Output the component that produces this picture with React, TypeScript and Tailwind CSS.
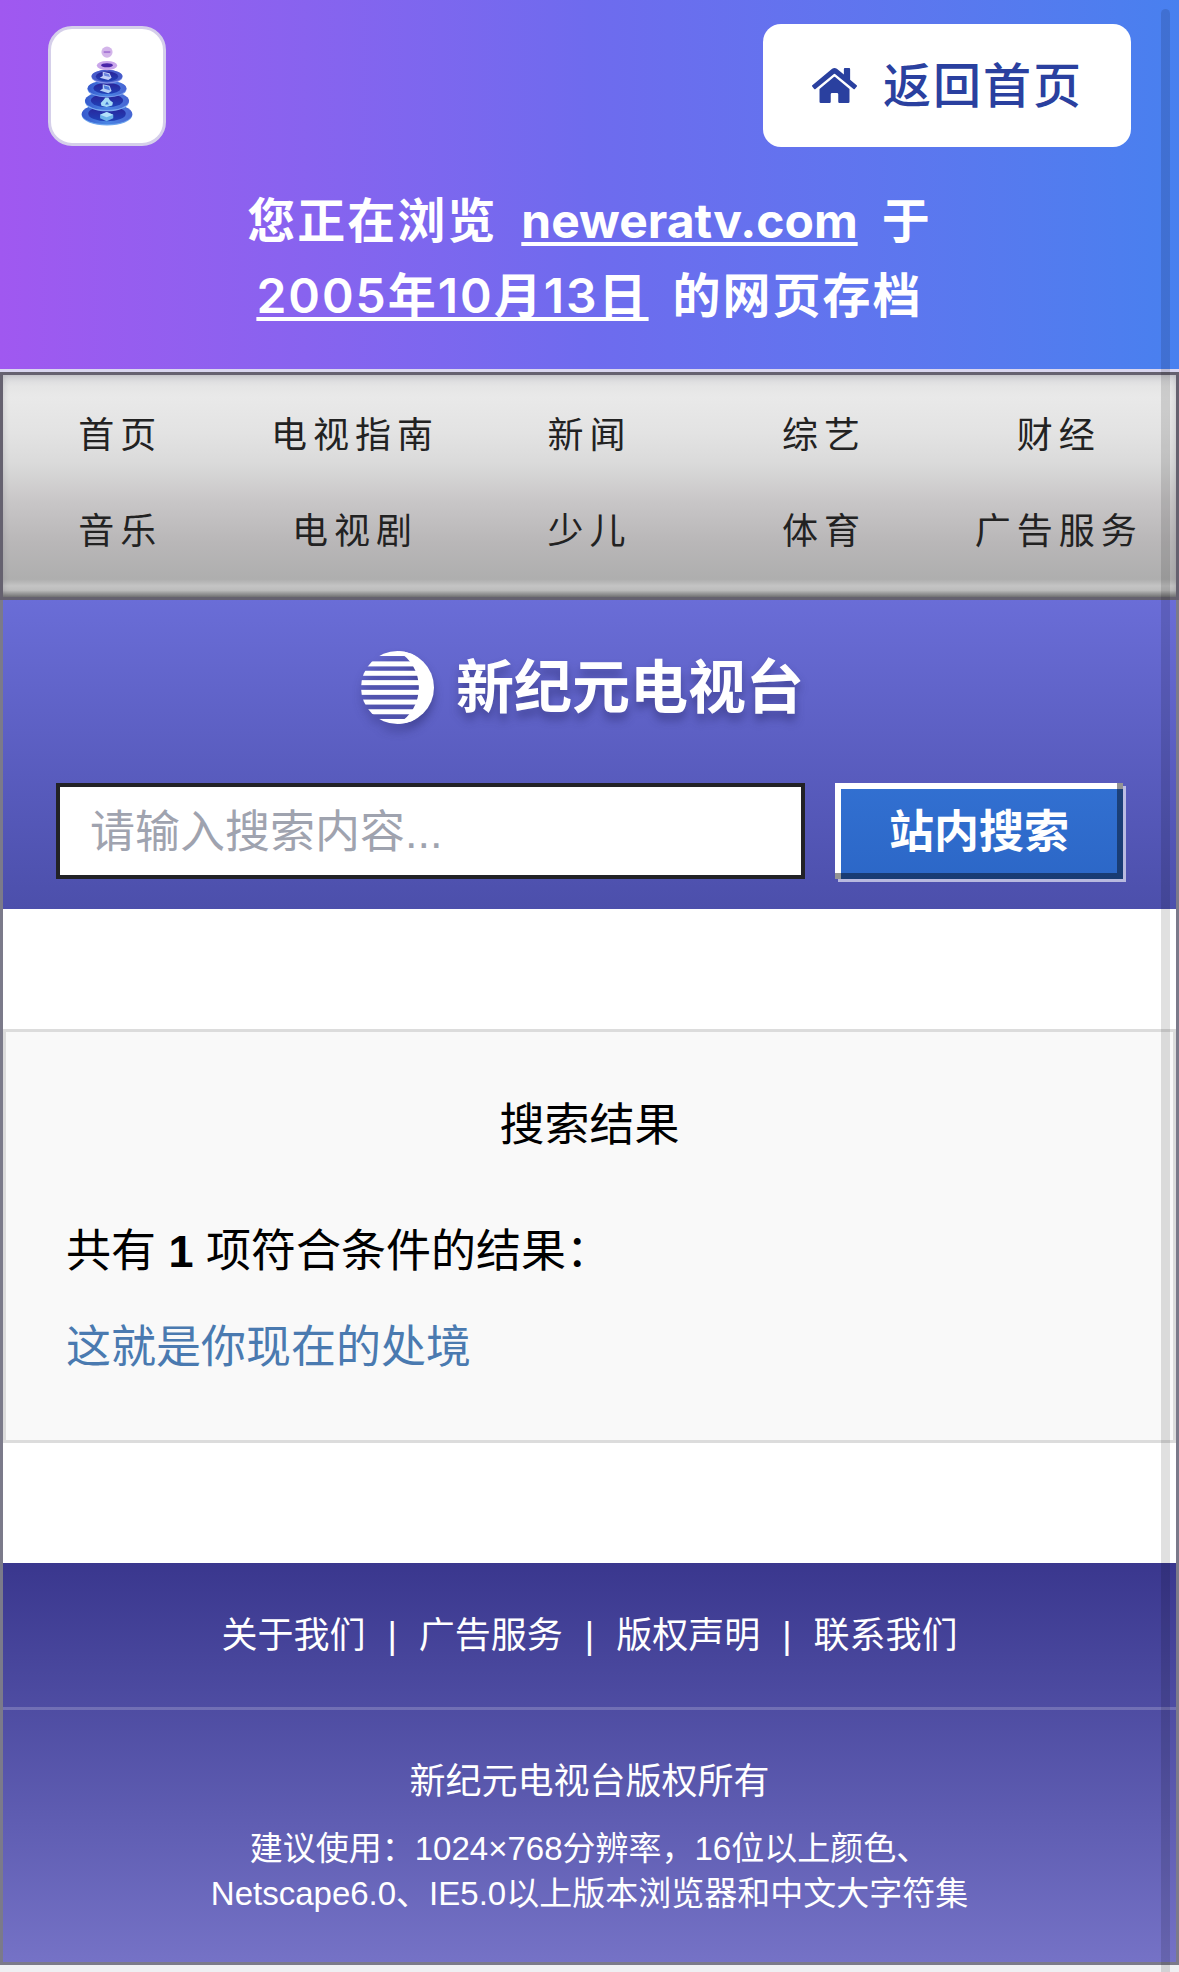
import React from "react";
import { FaHome } from "react-icons/fa";

const navItems = ["首页", "电视指南", "新闻", "综艺", "财经", "音乐", "电视剧", "少儿", "体育", "广告服务"];
const footerLinks = ["关于我们", "广告服务", "版权声明", "联系我们"];

function ArchiveLogo() {
  return (
    <svg viewBox="150 110 164 246" className="h-[82px] w-[54px]" aria-hidden="true">
      <defs>
        <linearGradient id="tier" x1="0" y1="0" x2="1" y2="0">
          <stop offset="0" stopColor="#3558cc" />
          <stop offset="0.5" stopColor="#4a86e4" />
          <stop offset="1" stopColor="#4763d2" />
        </linearGradient>
        <linearGradient id="well" x1="0" y1="0" x2="0" y2="1">
          <stop offset="0" stopColor="#2a2298" />
          <stop offset="1" stopColor="#1f42b8" />
        </linearGradient>
      </defs>
      <ellipse cx="232" cy="321" rx="77" ry="32" fill="#6fa6ee" />
      <ellipse cx="232" cy="318" rx="77" ry="31" fill="url(#tier)" />
      <ellipse cx="232" cy="317" rx="57" ry="23" fill="url(#well)" />
      <path d="M211 320l20-8 20 8v11l-20 9-20-9z" fill="#6db4ea" />
      <path d="M211 320l20-8 20 8-20 8z" fill="#b5e2fa" />
      <ellipse cx="232" cy="281" rx="67" ry="29" fill="#78a9ef" />
      <ellipse cx="232" cy="278" rx="67" ry="28" fill="url(#tier)" />
      <ellipse cx="232" cy="277" rx="49" ry="20" fill="url(#well)" />
      <path d="M213 285l9-10 5-7h9l5 8 9 7-2 9-17 5-16-4z" fill="#a5dbf7" />
      <path d="M226 289l6-9 6 9z" fill="#3b72cf" />
      <ellipse cx="232" cy="243" rx="59" ry="25" fill="#759cec" />
      <ellipse cx="232" cy="240" rx="59" ry="24" fill="url(#tier)" />
      <ellipse cx="232" cy="240" rx="41" ry="17" fill="url(#well)" />
      <path d="M219 228l21 4 6 16-10 7-26-8 9-6z" fill="#b3cff6" />
      <path d="M222 231l16 4 3 11-17-5z" fill="#4f7bdc" />
      <ellipse cx="232" cy="205" rx="47" ry="21" fill="#7f92e6" />
      <ellipse cx="232" cy="203" rx="47" ry="19" fill="#465bc9" />
      <ellipse cx="232" cy="204" rx="34" ry="15" fill="url(#well)" />
      <path d="M219 190l21 4 6 14-10 7-26-7 9-5z" fill="#c2cff7" />
      <path d="M222 193l16 4 3 9-17-4z" fill="#6a83de" />
      <ellipse cx="232" cy="171" rx="31" ry="14" fill="#c8a5ea" />
      <ellipse cx="232" cy="170" rx="18" ry="6" fill="#4a24a8" />
      <circle cx="232" cy="130" r="17" fill="#d3b5ea" />
      <path d="M222 127h20v6h-20z" fill="#a97bd6" />
    </svg>
  );
}

function StationMark() {
  return (
    <svg viewBox="62 91 218 218" className="size-[73px] shrink-0" fill="#fff" aria-hidden="true">
      <clipPath id="globe">
        <circle cx="171" cy="200" r="109" />
      </clipPath>
      <g clipPath="url(#globe)">
        {[91, 122, 150, 178, 207, 236, 265, 294].map((y) => (
          <rect key={y} x="62" y={y} width="174" height="15" />
        ))}
        <path d="M171 91A125 125 0 0 1 171 309L290 309V91Z" />
      </g>
    </svg>
  );
}

export default function App() {
  return (
    <div className="relative min-h-screen bg-[#eff0f3] font-['Liberation_Sans','Noto_Sans_CJK_SC',sans-serif] text-black">
      <header className="bg-linear-to-r from-[#a058f0] via-[#6e6bee] to-[#4880ef] px-12 pt-6 pb-9 font-['Inter','Noto_Sans_CJK_SC',sans-serif]">
        <div className="flex items-center justify-between">
          <a
            href="#archive"
            aria-label="网页存档"
            className="flex h-[120px] w-[118px] items-center justify-center rounded-3xl border-3 border-[#d5cfea] bg-white"
          >
            <ArchiveLogo />
          </a>
          <a
            href="#home"
            className="flex h-[123px] items-center gap-6 rounded-[18px] bg-white px-12 text-5xl font-medium tracking-[2px] text-[#2a409f]"
          >
            <span className="flex w-12 justify-center">
              <FaHome size={45} />
            </span>
            返回首页
          </a>
        </div>
        <p className="mt-9 text-center text-5xl/[75px] font-semibold tracking-[2px] text-white decoration-4 underline-offset-4 [text-decoration-skip-ink:none]">
          您正在浏览
          <a href="#site" className="mx-6 font-bold tracking-normal underline">neweratv.com</a>
          于
          <br />
          <a href="#date" className="mr-6 underline">2005年10月13日</a>
          的网页存档
        </p>
      </header>

      <nav
        aria-label="频道"
        className="border-t-3 border-[#d9d6ef]"
      >
        <ul className="grid grid-cols-5 border-3 border-[#65616f] bg-[linear-gradient(to_bottom,#d6d6da_0%,#e5e5e5_5%,#e9e9e9_10%,#e3e3e3_26%,#dadada_40%,#c8c6c7_57%,#b9b7b8_75%,#aeaeae_92%,#c4c4c4_95%,#bcbcbc_97%,#777_100%)] pt-[13px] pb-[17px] shadow-[inset_0_0_6px_rgba(80,80,90,0.25)]">
          {navItems.map((item) => (
            <li key={item} className="flex h-24 items-center justify-center">
              <a href="#channel" className="text-4xl tracking-[6px] whitespace-nowrap text-[#222]">
                {item}
              </a>
            </li>
          ))}
        </ul>
      </nav>

      <div className="border-x-3 border-b-3 border-[#7b7a8a] bg-white">
        <section className="bg-linear-to-b from-[#6a6dd7] to-[#4c4fab] px-[53px] pt-[51px] pb-[30px]">
          <div className="flex items-center justify-center gap-[22px] pr-3.5 drop-shadow-[0_7px_5px_rgba(30,30,90,0.45)]">
            <StationMark />
            <h1 className="text-[58px]/[72px] font-bold text-white">新纪元电视台</h1>
          </div>
          <form className="mt-[59px] flex gap-[30px]" onSubmit={(e) => e.preventDefault()}>
            <input
              type="text"
              aria-label="请输入搜索内容"
              placeholder="请输入搜索内容..."
              className="h-24 min-w-0 flex-1 border-4 border-[#222226] bg-white px-[30px] pt-1 text-[45px] placeholder:text-[#9fa3af]"
            />
            <button
              type="submit"
              className="h-24 w-72 bg-linear-to-b from-[#3270d1] to-[#2c67c7] pt-1 text-[45px] font-bold text-white shadow-[inset_-6px_-6px_0_rgba(0,0,0,0.42),inset_6px_6px_0_#fff,3px_3px_0_rgba(255,255,255,0.6)]"
            >
              站内搜索
            </button>
          </form>
        </section>

        <main className="my-[120px] border-3 border-[#dcdcdc] bg-[#f9f9f9] px-[60px] pt-[62px] pb-[60px] text-[45px]/[64px]">
          <h2 className="text-center">搜索结果</h2>
          <p className="mt-[62px]">
            共有 <b>1</b> 项符合条件的结果：
          </p>
          <p className="mt-8">
            <a href="#result" className="text-[#4a7ab0]">这就是你现在的处境</a>
          </p>
        </main>

        <footer className="bg-linear-to-b from-[#3a378e] to-[#7572c6] text-center text-white">
          <div className="flex h-36 items-center justify-center gap-[22px] pt-0.5 text-4xl">
            {footerLinks.map((label, i) => (
              <React.Fragment key={label}>
                {i > 0 && <span>|</span>}
                <a href="#about">{label}</a>
              </React.Fragment>
            ))}
          </div>
          <div className="border-t-3 border-white/20 pt-[45px] pb-[46px]">
            <p className="text-4xl/[54px]">新纪元电视台版权所有</p>
            <p className="mt-[17px] text-[33px]/[45px]">
              建议使用：1024×768分辨率，16位以上颜色、
              <br />
              Netscape6.0、IE5.0以上版本浏览器和中文大字符集
            </p>
          </div>
        </footer>
      </div>

      <div className="pointer-events-none absolute top-[9px] right-[9px] bottom-0 w-[9px] rounded-t-full bg-black/12" />
    </div>
  );
}
